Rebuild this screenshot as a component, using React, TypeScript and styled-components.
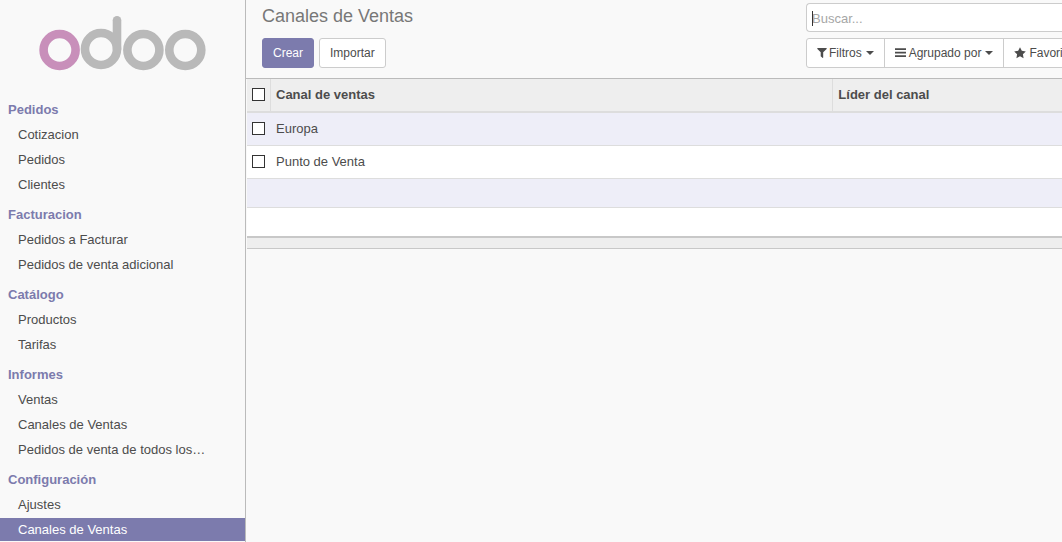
import React from "react";
import styled, { createGlobalStyle } from "styled-components";

const GlobalStyle = createGlobalStyle`
  *, *::before, *::after { box-sizing: border-box; }
  body {
    margin: 0;
    overflow: hidden;
    background: #f9f9f9;
    color: #4c4c4c;
    font-family: "Liberation Sans", Arial, sans-serif;
    font-size: 13px;
    line-height: 18px;
  }
  button, input { font: inherit; color: inherit; }
`;

const Page = styled.div`
  display: flex;
  min-height: 100vh;
`;

const Sidebar = styled.nav`
  flex: 0 0 246px;
  border-right: 1px solid #bbb;
  padding-bottom: 1px;
`;

const LogoLink = styled.a`
  display: block;
  padding: 15px 0 26px 38px;
  svg { display: block; }
`;

const Section = styled.section`
  display: flex;
  flex-direction: column;
  gap: 2px;
  margin-bottom: 7px;
  &:last-child { margin-bottom: 0; }
`;

const SectionTitle = styled.h2`
  margin: 0;
  padding-left: 8px;
  font-size: 13px;
  line-height: 23px;
  color: #7c7bad;
`;

const MenuList = styled.ul`
  display: flex;
  flex-direction: column;
  gap: 2px;
  margin: 0;
  padding: 0;
  list-style: none;
`;

const MenuLink = styled.a<{ $active: boolean }>`
  display: block;
  padding: 0 18px;
  line-height: 23px;
  text-decoration: none;
  white-space: nowrap;
  color: ${(p) => (p.$active ? "#fff" : "#4c4c4c")};
  background: ${(p) => (p.$active ? "#7c7bad" : "transparent")};
`;

const Main = styled.main`
  flex: 1;
  min-width: 0;
  overflow: hidden;
`;

const ControlPanel = styled.header`
  display: grid;
  grid-template-columns: 560fr 256fr;
  border-bottom: 1px solid #bbb;
`;

const PanelColumn = styled.div`
  display: flex;
  flex-direction: column;
  gap: 6px;
  min-width: 0;
  padding: 3px 0 10px;
`;

const PanelLeft = styled(PanelColumn)`
  padding-left: 16px;
`;

const Title = styled.h1`
  margin: 0;
  font-size: 18px;
  font-weight: 400;
  line-height: 26px;
  height: 29px;
  color: #777;
`;

const ButtonRow = styled.div`
  display: flex;
  gap: 5px;
`;

const Button = styled.button<{ $primary?: boolean }>`
  height: 30px;
  padding: 0 10px;
  border: 1px solid ${(p) => (p.$primary ? "#7c7bad" : "#ccc")};
  border-radius: 3px;
  font-size: 12px;
  color: ${(p) => (p.$primary ? "#fff" : "#4c4c4c")};
  background: ${(p) => (p.$primary ? "#7c7bad" : "#fff")};
`;

const SearchBox = styled.label`
  position: relative;
  display: block;
  flex: 0 0 29px;
  border: 1px solid #ccc;
  border-right: 0;
  border-radius: 4px 0 0 4px;
  background: #fff;
  &::before {
    content: "";
    position: absolute;
    left: 5px;
    top: 7px;
    width: 1px;
    height: 15px;
    background: #333;
  }
`;

const SearchInput = styled.input`
  display: block;
  width: 100%;
  height: 27px;
  padding: 1px 5px 0;
  border: 0;
  outline: 0;
  background: transparent;
  &::placeholder { color: #a6a6a6; opacity: 1; }
`;

const FilterGroup = styled.div`
  display: flex;
`;

const FilterButton = styled.button`
  display: flex;
  flex: none;
  align-items: center;
  height: 30px;
  padding: 0 10px;
  margin-right: -1px;
  border: 1px solid #ccc;
  font-size: 12px;
  white-space: nowrap;
  color: #4c4c4c;
  background: #fff;
  &:first-child { border-radius: 3px 0 0 3px; }
  svg { flex: none; }
`;

const Label = styled.span`
  margin: 0 4px 0 2px;
`;

const Table = styled.table`
  width: calc(100% - 1px);
  margin-left: 1px;
  border-collapse: separate;
  border-spacing: 0;
  table-layout: fixed;
  background: #fff;
`;

const HeadCell = styled.th<{ $width?: string }>`
  width: ${(p) => p.$width ?? "auto"};
  height: 34px;
  padding: 0 5px;
  border-right: 1px solid #ddd;
  border-bottom: 2px solid #ddd;
  text-align: left;
  background: #eee;
  &:last-child { border-right: 0; }
`;

const Row = styled.tr<{ $height?: number }>`
  height: ${(p) => p.$height ?? 33}px;
  &:nth-child(odd) { background: #eeeef8; }
`;

const Cell = styled.td`
  padding: 0 5px;
  border-bottom: 1px solid #ddd;
  ${Row}:last-child & { border-bottom: 2px solid #c8c8c8; }
`;

const FootCell = styled.td`
  height: 11px;
  padding: 0;
  border-bottom: 1px solid #c8c8c8;
  background: #eee;
`;

const Check = styled.input`
  display: block;
  appearance: none;
  width: 13px;
  height: 13px;
  margin: 0 0 2px;
  border: 1px solid #333;
  background: #fff;
`;

const menu = [
  { title: "Pedidos", items: ["Cotizacion", "Pedidos", "Clientes"] },
  { title: "Facturacion", items: ["Pedidos a Facturar", "Pedidos de venta adicional"] },
  { title: "Catálogo", items: ["Productos", "Tarifas"] },
  { title: "Informes", items: ["Ventas", "Canales de Ventas", "Pedidos de venta de todos los…"] },
  { title: "Configuración", items: ["Ajustes", "Canales de Ventas"] },
];

const channels = ["Europa", "Punto de Venta"];

const Logo = () => (
  <svg width="170" height="57" viewBox="0 0 170 57" fill="none" strokeWidth="8.6" role="img" aria-label="odoo">
    <circle cx="21.6" cy="35" r="16" stroke="#c88fba" />
    <g stroke="#b9b9b9">
      <circle cx="63" cy="34" r="16" />
      <path d="M79 5.3v28.7" strokeLinecap="round" />
      <circle cx="105.4" cy="35" r="16" />
      <circle cx="147.3" cy="35" r="16" />
    </g>
  </svg>
);

const FilterIcon = () => (
  <svg width="10" height="12" viewBox="0 0 10 12" fill="currentColor" aria-hidden="true">
    <path d="M.6 1h8.8q.6.3.2.9L6.2 5.3v5.2q-.2.7-.8.3L3.7 9.2V5.3L.4 1.900Q0 1.300.6 1z" />
  </svg>
);

const BarsIcon = () => (
  <svg width="12" height="12" viewBox="0 0 12 12" fill="currentColor" aria-hidden="true">
    <path d="M0 1.300h11v1.800H0zM0 4.800h11v1.800H0zM0 8.300h11v1.800H0z" />
  </svg>
);

const StarIcon = () => (
  <svg width="13" height="12" viewBox="0 0 13 12" fill="currentColor" aria-hidden="true">
    <path d="M6 .2l1.800 3.600 4 .6-2.900 2.800.7 4-3.600-1.900-3.600 1.900.7-4L.2 4.400l4-.6z" />
  </svg>
);

const Caret = () => (
  <svg width="8" height="4" viewBox="0 0 8 4" fill="currentColor" aria-hidden="true">
    <path d="M0 0h8L4 4z" />
  </svg>
);

const filters = [
  { label: "Filtros", Icon: FilterIcon },
  { label: "Agrupado por", Icon: BarsIcon },
  { label: "Favoritos", Icon: StarIcon },
];

export default function App() {
  return (
    <Page>
      <GlobalStyle />
      <Sidebar>
        <LogoLink href="#">
          <Logo />
        </LogoLink>
        {menu.map((section) => (
          <Section key={section.title}>
            <SectionTitle>{section.title}</SectionTitle>
            <MenuList>
              {section.items.map((item) => (
                <li key={item}>
                  <MenuLink href="#" $active={section.title === "Configuración" && item === "Canales de Ventas"}>
                    {item}
                  </MenuLink>
                </li>
              ))}
            </MenuList>
          </Section>
        ))}
      </Sidebar>
      <Main>
        <ControlPanel>
          <PanelLeft>
            <Title>Canales de Ventas</Title>
            <ButtonRow>
              <Button type="button" $primary>Crear</Button>
              <Button type="button">Importar</Button>
            </ButtonRow>
          </PanelLeft>
          <PanelColumn>
            <SearchBox>
              <SearchInput type="text" placeholder="Buscar..." aria-label="Buscar" />
            </SearchBox>
            <FilterGroup>
              {filters.map(({ label, Icon }) => (
                <FilterButton type="button" key={label}>
                  <Icon />
                  <Label>{label}</Label>
                  <Caret />
                </FilterButton>
              ))}
            </FilterGroup>
          </PanelColumn>
        </ControlPanel>
        <Table>
          <thead>
            <tr>
              <HeadCell $width="24px"><Check type="checkbox" aria-label="Seleccionar todo" /></HeadCell>
              <HeadCell $width="69%">Canal de ventas</HeadCell>
              <HeadCell>Líder del canal</HeadCell>
            </tr>
          </thead>
          <tbody>
            {channels.map((name) => (
              <Row key={name}>
                <Cell><Check type="checkbox" aria-label={name} /></Cell>
                <Cell>{name}</Cell>
                <Cell />
              </Row>
            ))}
            <Row $height={29}><Cell colSpan={3} /></Row>
            <Row $height={30}><Cell colSpan={3} /></Row>
          </tbody>
          <tfoot>
            <tr><FootCell colSpan={3} /></tr>
          </tfoot>
        </Table>
      </Main>
    </Page>
  );
}
